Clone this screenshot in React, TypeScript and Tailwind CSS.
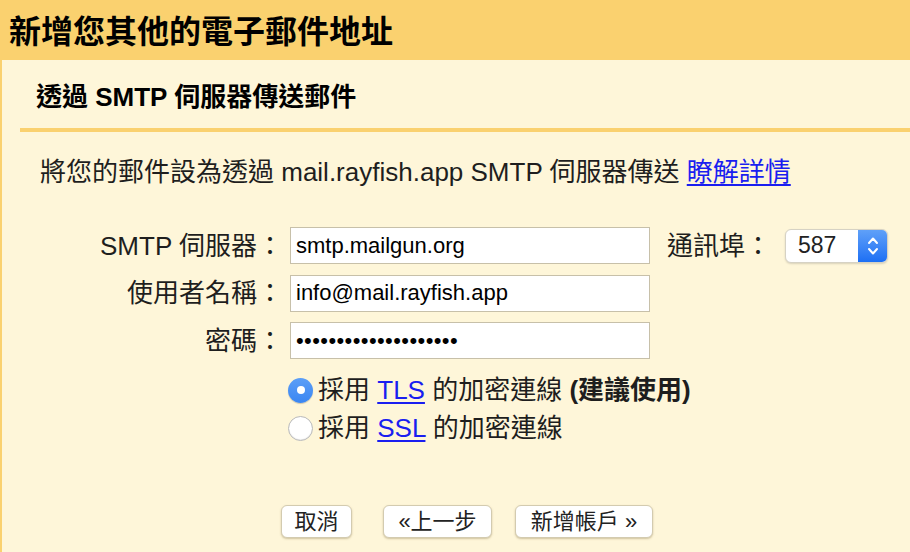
const font = {
  fontFamily: '"Liberation Sans", "Noto Sans CJK TC", sans-serif',
};

const Radio = ({ checked }: { checked: boolean }) =>
  checked ? (
    <span className="flex h-[25px] w-[25px] shrink-0 items-center justify-center rounded-full bg-gradient-to-b from-[#5b9ef7] to-[#3a86f2] shadow-[0_1px_1px_rgba(0,0,0,0.2)]">
      <span className="h-[8px] w-[8px] rounded-full bg-white"></span>
    </span>
  ) : (
    <span className="h-[25px] w-[25px] shrink-0 rounded-full border border-[#b9b9b9] bg-white shadow-[inset_0_-1px_1px_rgba(0,0,0,0.08)]"></span>
  );

export default function App() {
  return (
    <div
      className="flex h-[552px] w-[910px] flex-col overflow-hidden bg-[#fef6d9] text-[#1e1e1e]"
      style={font}
    >
      {/* Header */}
      <div className="flex h-[60px] shrink-0 items-center bg-[#fad16f] pl-[9px] pt-[3px]">
        <h1 className="text-[32px] font-bold leading-[40px] text-black">新增您其他的電子郵件地址</h1>
      </div>

      <div className="flex flex-1 flex-col border-l-2 border-[#fad16f]">
        {/* Section title */}
        <div className="h-[68px] shrink-0 pl-[34px] pt-[22px]">
          <h2 className="text-[26px] font-bold leading-[30px] text-black">透過 SMTP 伺服器傳送郵件</h2>
        </div>
        <div className="ml-[18px] h-[4px] shrink-0 bg-[#fad16f]"></div>

        {/* Description */}
        <p className="pl-[38px] pt-[25px] text-[26px] leading-[30px]">
          將您的郵件設為透過 mail.rayfish.app SMTP 伺服器傳送{" "}
          <a href="#" className="text-[#1a1ef0] underline underline-offset-[3px]">
            瞭解詳情
          </a>
        </p>

        {/* Form */}
        <div className="mt-[40px] flex flex-col gap-[10.5px]">
          <div className="flex h-[37px] items-center">
            <label className="w-[281px] text-right text-[26px] leading-[30px]">SMTP 伺服器：</label>
            <input
              readOnly
              value="smtp.mailgun.org"
              className="ml-[7px] h-[37px] w-[360px] border border-[#c7c0a9] bg-white pl-[5px] text-[22px] text-black outline-none"
              style={font}
            />
            <label className="ml-[17px] text-[26px] leading-[30px]">通訊埠：</label>
            <div className="ml-[14px] flex h-[34px] w-[103px] overflow-hidden rounded-[6px] border border-[#d6d2c4] bg-white shadow-[0_1px_2px_rgba(0,0,0,0.15)]">
              <span className="flex flex-1 items-center pl-[12px] text-[23px] text-[#222]">587</span>
              <span className="flex w-[29px] items-center justify-center bg-gradient-to-b from-[#5fa0f8] to-[#1c6ff4]">
                <svg width="12" height="22" viewBox="0 0 12 22" fill="none" stroke="white" strokeWidth="2" strokeLinecap="round" strokeLinejoin="round">
                  <path d="M2 8 L6 3.5 L10 8" />
                  <path d="M2 14 L6 18.5 L10 14" />
                </svg>
              </span>
            </div>
          </div>

          <div className="flex h-[37px] items-center">
            <label className="w-[281px] text-right text-[26px] leading-[30px]">使用者名稱：</label>
            <input
              readOnly
              value="info@mail.rayfish.app"
              className="ml-[7px] h-[37px] w-[360px] border border-[#c7c0a9] bg-white pl-[5px] text-[22px] text-black outline-none"
              style={font}
            />
          </div>

          <div className="flex h-[37px] items-center">
            <label className="w-[281px] text-right text-[26px] leading-[30px]">密碼：</label>
            <input
              readOnly
              value="••••••••••••••••••••"
              className="ml-[7px] h-[37px] w-[360px] border border-[#c7c0a9] bg-white pl-[5px] text-[22px] tracking-[0.4px] text-black outline-none"
              style={font}
            />
          </div>
        </div>

        {/* Encryption options */}
        <div className="mt-[12px] flex flex-col pl-[286px]">
          <div className="flex h-[38px] items-center gap-[5px] text-[26px] leading-[30px]">
            <Radio checked />
            <span>
              採用{" "}
              <a href="#" className="text-[#1a1ef0] underline underline-offset-[3px]">
                TLS
              </a>{" "}
              的加密連線 <b>(建議使用)</b>
            </span>
          </div>
          <div className="flex h-[38px] items-center gap-[5px] text-[26px] leading-[30px]">
            <Radio checked={false} />
            <span>
              採用{" "}
              <a href="#" className="text-[#1a1ef0] underline underline-offset-[3px]">
                SSL
              </a>{" "}
              的加密連線
            </span>
          </div>
        </div>

        {/* Buttons */}
        <div className="mt-[58px] flex pl-[279px]">
          <button className="h-[33px] w-[71px] rounded-[6px] border border-[#d3cbb0] bg-white text-[22px] leading-none text-[#222] shadow-[0_1px_2px_rgba(120,100,50,0.35)]">
            取消
          </button>
          <button className="ml-[31px] h-[33px] w-[109px] rounded-[6px] border border-[#d3cbb0] bg-white text-[22px] leading-none text-[#222] shadow-[0_1px_2px_rgba(120,100,50,0.35)]">
            «上一步
          </button>
          <button className="ml-[23px] h-[33px] w-[138px] rounded-[6px] border border-[#d3cbb0] bg-white text-[22px] leading-none text-[#222] shadow-[0_1px_2px_rgba(120,100,50,0.35)]">
            新增帳戶 »
          </button>
        </div>
      </div>
    </div>
  );
}
